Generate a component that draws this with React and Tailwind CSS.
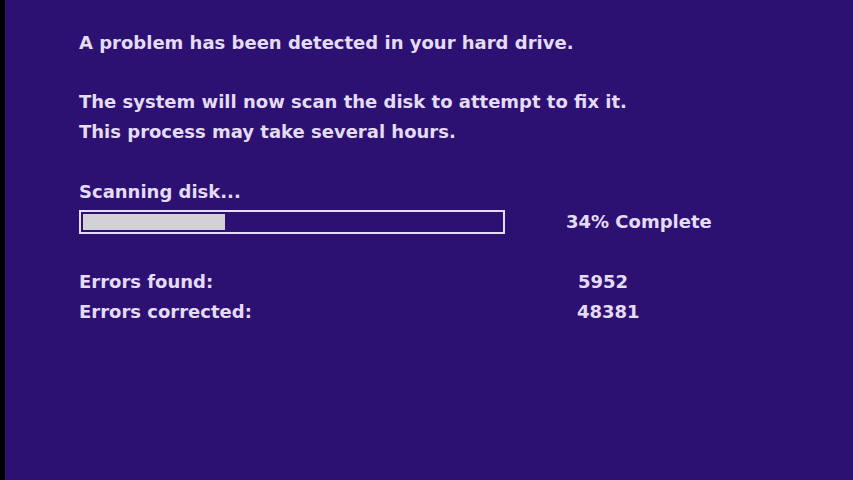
export default function App() {
  return (
    <div className="flex h-[480px] w-[853px] overflow-hidden bg-[#2c1172]">
      <div className="w-[5px] shrink-0 bg-black" />
      <div className="flex flex-col pl-[74px] pt-[28px] font-['DejaVu_Sans',sans-serif] text-[18px] font-bold leading-[30px] text-[#e4dcf4]">
        <div>A problem has been detected in your hard drive.</div>
        <div className="mt-[29px]">The system will now scan the disk to attempt to fix it.</div>
        <div>This process may take several hours.</div>
        <div className="mt-[30px]">Scanning disk...</div>
        <div className="flex h-[30px] items-center">
          <div className="h-[24px] w-[426px] border-2 border-[#e4dcf4] p-[2px]">
            <div className="h-full w-[34%] bg-[#d4d0d8]" />
          </div>
          <div className="ml-[61px]">34% Complete</div>
        </div>
        <div className="mt-[30px] flex">
          <div className="w-[499px]">Errors found:</div>
          <div>5952</div>
        </div>
        <div className="flex">
          <div className="w-[498px]">Errors corrected:</div>
          <div>48381</div>
        </div>
      </div>
    </div>
  );
}
